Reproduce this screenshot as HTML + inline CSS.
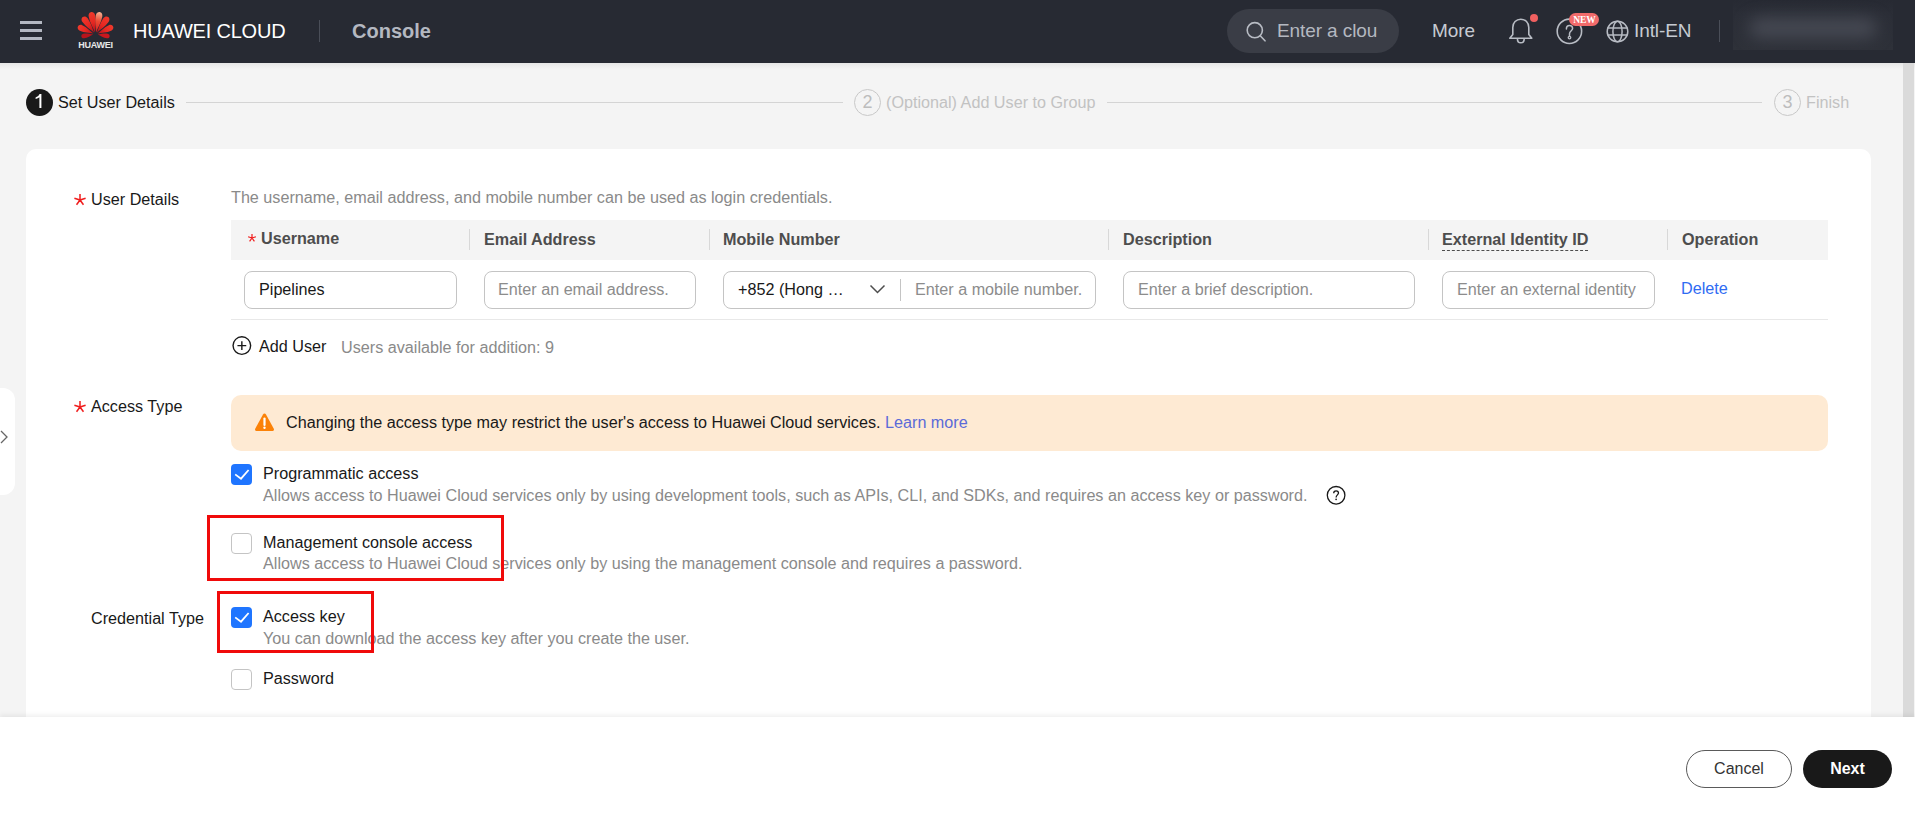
<!DOCTYPE html>
<html><head><meta charset="utf-8">
<style>
*{box-sizing:border-box;margin:0;padding:0}
html,body{width:1915px;height:813px;overflow:hidden;background:#f4f4f4;font-family:"Liberation Sans",sans-serif;color:#191919}
.a{position:absolute;white-space:nowrap}
#hdr{position:absolute;left:0;top:0;width:1915px;height:63px;background:#272a33}
.t16{font-size:16.18px;line-height:20px;height:20px}
.gray{color:#8a8a8a}
.inp{position:absolute;height:38px;border:1px solid #c4c4c4;border-radius:8px;background:#fff}
.ph{color:#8c8c8c}
.th{font-weight:bold;color:#4d4d4d}
.cb{position:absolute;width:21px;height:21px;border-radius:4px}
.cb.on{background:#1f75ff}
.cb.off{border:1px solid #c4c4c4;background:#fff}
.redbox{position:absolute;border:3px solid #f00a0a}
</style></head><body>
<div id="hdr">
  <!-- hamburger -->
  <div class="a" style="left:20px;top:21px;width:22px;height:3px;background:#b4b8c2"></div>
  <div class="a" style="left:20px;top:29px;width:22px;height:3px;background:#b4b8c2"></div>
  <div class="a" style="left:20px;top:37px;width:22px;height:3px;background:#b4b8c2"></div>
  <!-- logo -->
  <svg class="a" style="left:76px;top:10px" width="40" height="30" viewBox="0 0 40 30"><defs><linearGradient id="g1" x1="0" y1="1" x2="0" y2="0"><stop offset="0" stop-color="#b8101a"/><stop offset="0.5" stop-color="#e62822"/><stop offset="1" stop-color="#f03a2c"/></linearGradient><linearGradient id="g2" x1="0" y1="1" x2="0" y2="0"><stop offset="0" stop-color="#d81e1e"/><stop offset="0.55" stop-color="#ec4a34"/><stop offset="1" stop-color="#f8b494"/></linearGradient></defs><path d="M0,0 C-0.99,-5.19 -3.30,-10.38 -3.30,-16.60 C-3.30,-19.71 -1.32,-20.75 0,-20.75 C1.32,-20.75 3.30,-19.71 3.30,-16.60 C3.30,-10.38 0.99,-5.19 0,0Z" fill="url(#g1)" transform="translate(19.00,22.40) rotate(-10.55)"/><path d="M0,0 C-0.99,-5.19 -3.30,-10.38 -3.30,-16.60 C-3.30,-19.71 -1.32,-20.75 0,-20.75 C1.32,-20.75 3.30,-19.71 3.30,-16.60 C3.30,-10.38 0.99,-5.19 0,0Z" fill="url(#g2)" transform="translate(20.00,22.40) rotate(10.55)"/><path d="M0,0 C-0.96,-4.87 -3.20,-9.74 -3.20,-15.59 C-3.20,-18.51 -1.28,-19.48 0,-19.48 C1.28,-19.48 3.20,-18.51 3.20,-15.59 C3.20,-9.74 0.96,-4.87 0,0Z" fill="url(#g1)" transform="translate(18.20,22.80) rotate(-35.81)"/><path d="M0,0 C-0.96,-4.87 -3.20,-9.74 -3.20,-15.59 C-3.20,-18.51 -1.28,-19.48 0,-19.48 C1.28,-19.48 3.20,-18.51 3.20,-15.59 C3.20,-9.74 0.96,-4.87 0,0Z" fill="url(#g1)" transform="translate(20.80,22.80) rotate(35.81)"/><path d="M0,0 C-0.90,-4.26 -3.00,-8.53 -3.00,-13.65 C-3.00,-16.20 -1.20,-17.06 0,-17.06 C1.20,-17.06 3.00,-16.20 3.00,-13.65 C3.00,-8.53 0.90,-4.26 0,0Z" fill="url(#g1)" transform="translate(17.50,23.50) rotate(-66.14)"/><path d="M0,0 C-0.90,-4.26 -3.00,-8.53 -3.00,-13.65 C-3.00,-16.20 -1.20,-17.06 0,-17.06 C1.20,-17.06 3.00,-16.20 3.00,-13.65 C3.00,-8.53 0.90,-4.26 0,0Z" fill="url(#g1)" transform="translate(21.50,23.50) rotate(66.14)"/><path d="M0,0 C-0.69,-2.99 -2.30,-5.98 -2.30,-9.57 C-2.30,-11.37 -0.92,-11.97 0,-11.97 C0.92,-11.97 2.30,-11.37 2.30,-9.57 C2.30,-5.98 0.69,-2.99 0,0Z" fill="#b8141c" transform="translate(17.20,24.40) rotate(-99.62)"/><path d="M0,0 C-0.69,-2.99 -2.30,-5.98 -2.30,-9.57 C-2.30,-11.37 -0.92,-11.97 0,-11.97 C0.92,-11.97 2.30,-11.37 2.30,-9.57 C2.30,-5.98 0.69,-2.99 0,0Z" fill="#c8181e" transform="translate(21.80,24.40) rotate(99.62)"/></svg>
  <div class="a" style="left:76px;top:40px;width:39px;text-align:center;font-size:9px;line-height:10px;font-weight:bold;color:#e8e8e8;letter-spacing:-0.25px">HUAWEI</div>
  <div class="a" style="left:133px;top:20px;font-size:20px;line-height:23px;color:#fff;letter-spacing:-0.2px">HUAWEI CLOUD</div>
  <div class="a" style="left:319px;top:20px;width:1px;height:22px;background:#4a4e58"></div>
  <div class="a" style="left:352px;top:20px;font-size:20px;line-height:23px;color:#b4b8c1;font-weight:bold">Console</div>
  <!-- search -->
  <div class="a" style="left:1227px;top:9px;width:172px;height:44px;border-radius:22px;background:#3a3d46"></div>
  <svg class="a" style="left:1244px;top:20px" width="24" height="24" viewBox="0 0 24 24"><circle cx="10.8" cy="10.2" r="7.6" fill="none" stroke="#b8bcc4" stroke-width="1.6"/><path d="M16.2,15.8 L21,20.8" stroke="#b8bcc4" stroke-width="1.6" stroke-linecap="round"/></svg>
  <div class="a" style="left:1277px;top:20px;font-size:19px;line-height:22px;color:#b4b8c0;letter-spacing:-0.1px">Enter a clou</div>
  <div class="a" style="left:1432px;top:20px;font-size:19px;line-height:22px;color:#c6cad2;letter-spacing:-0.1px">More</div>
  <!-- bell -->
  <svg class="a" style="left:1506px;top:16px" width="30" height="30" viewBox="0 0 30 30"><path d="M3.8,22.2 L25.8,22.2 L22.8,18.4 L22.8,11.4 C22.8,6.6 19.4,3.2 14.8,3.2 C10.2,3.2 6.8,6.6 6.8,11.4 L6.8,18.4 Z" fill="none" stroke="#b8bcc4" stroke-width="1.6" stroke-linejoin="round"/><path d="M11.4,22.4 C11.4,25 12.9,26.8 14.8,26.8 C16.7,26.8 18.2,25 18.2,22.4" fill="none" stroke="#b8bcc4" stroke-width="1.6"/></svg>
  <div class="a" style="left:1530px;top:14px;width:8px;height:8px;border-radius:50%;background:#f06060"></div>
  <!-- help -->
  <svg class="a" style="left:1555px;top:17px" width="29" height="29" viewBox="0 0 29 29"><circle cx="14.4" cy="14.3" r="12.2" fill="none" stroke="#b8bcc4" stroke-width="1.6"/><path d="M11.4,12 C11.4,9.9 12.8,8.6 14.5,8.6 C16.3,8.6 17.6,9.9 17.6,11.6 C17.6,13.6 14.5,14.1 14.5,16.8 L14.5,18.8" fill="none" stroke="#b8bcc4" stroke-width="1.5" stroke-linecap="round"/><circle cx="14.5" cy="20.6" r="1.3" fill="none" stroke="#b8bcc4" stroke-width="1.3"/></svg>
  <div class="a" style="left:1569px;top:13px;width:30px;height:13px;border-radius:7px;background:#f26b6b;color:#fff;font-family:'Liberation Serif',serif;font-weight:bold;font-size:9.5px;line-height:13px;text-align:center;padding:1px 0 0 1px">NEW</div>
  <!-- globe -->
  <svg class="a" style="left:1605px;top:19px" width="25" height="25" viewBox="0 0 25 25"><circle cx="12.5" cy="12.5" r="10.3" fill="none" stroke="#b8bcc4" stroke-width="1.5"/><ellipse cx="12.5" cy="12.5" rx="4.6" ry="10.3" fill="none" stroke="#b8bcc4" stroke-width="1.5"/><path d="M2.5,9 H22.5 M2.5,16 H22.5" stroke="#b8bcc4" stroke-width="1.5"/></svg>
  <div class="a" style="left:1634px;top:20px;font-size:19px;line-height:22px;color:#c6cad2;letter-spacing:-0.1px">Intl-EN</div>
  <div class="a" style="left:1719px;top:20px;width:1px;height:22px;background:#4a4e58"></div>
  <!-- blurred user -->
  <div class="a" style="left:1733px;top:0px;width:160px;height:50px;background:linear-gradient(#272a33,#2b2e37 30%,#2e3139);overflow:hidden">
    <div style="position:absolute;left:16px;top:18px;width:128px;height:20px;border-radius:10px;background:#464953;filter:blur(8px)"></div>
  </div>
</div>
<!-- header shadow -->
<div class="a" style="left:0;top:63px;width:1915px;height:6px;background:linear-gradient(#e6e6e6,#f4f4f4)"></div>

<!-- steps -->
<div class="a" style="left:26px;top:89px;width:27px;height:27px;border-radius:50%;background:#191919"></div><svg class="a" style="left:26px;top:89px" width="27" height="27" viewBox="0 0 27 27"><path d="M13.6,5 L15.4,5 L15.4,19 L13.4,19 L13.4,8.2 C12.4,9 11.2,9.6 9.6,10 L9.6,8.4 C11.3,7.8 12.7,6.8 13.6,5Z" fill="#fff"/></svg>
<div class="a t16" style="left:58px;top:92px">Set User Details</div>
<div class="a" style="left:186px;top:102px;width:657px;height:1px;background:#d4d4d4"></div>
<div class="a" style="left:854px;top:89px;width:27px;height:27px;border-radius:50%;border:1px solid #c8c8c8;color:#bdbdbd;font-size:18px;line-height:25px;text-align:center">2</div>
<div class="a t16" style="left:886px;top:92px;color:#c2c2c2">(Optional) Add User to Group</div>
<div class="a" style="left:1107px;top:102px;width:655px;height:1px;background:#d4d4d4"></div>
<div class="a" style="left:1774px;top:89px;width:27px;height:27px;border-radius:50%;border:1px solid #c8c8c8;color:#bdbdbd;font-size:18px;line-height:25px;text-align:center">3</div>
<div class="a t16" style="left:1806px;top:92px;color:#c2c2c2">Finish</div>

<!-- card -->
<div class="a" style="left:26px;top:149px;width:1845px;height:700px;border-radius:10px;background:#fff"></div>

<!-- scrollbar -->
<div class="a" style="left:1903px;top:63px;width:11px;height:654px;background:#dadada"></div>

<!-- left tab -->
<div class="a" style="left:-12px;top:388px;width:27px;height:107px;border-radius:12px;background:#fff"></div>
<svg class="a" style="left:0;top:429px" width="10" height="16" viewBox="0 0 10 16"><path d="M1,2 L7,8 L1,14" fill="none" stroke="#666" stroke-width="1.3"/></svg>

<!-- User details -->
<svg class="a" style="left:72.10px;top:191.90px" width="16" height="16" viewBox="0 0 16 16"><path d="M8.00,8.00 L8.00,2.10 M8.00,8.00 L13.61,6.18 M8.00,8.00 L11.47,12.77 M8.00,8.00 L4.53,12.77 M8.00,8.00 L2.39,6.18" stroke="#f01c1c" stroke-width="1.5" stroke-linecap="butt" fill="none"/></svg>
<div class="a t16" style="left:91px;top:189px">User Details</div>
<div class="a t16 gray" style="left:231px;top:187px">The username, email address, and mobile number can be used as login credentials.</div>

<div class="a" style="left:231px;top:220px;width:1597px;height:40px;background:#f4f4f4"></div>
<div class="a" style="left:231px;top:319px;width:1597px;height:1px;background:#e8e8e8"></div>
<div class="a" style="left:469px;top:229px;width:1px;height:21px;background:#d8d8d8"></div>
<div class="a" style="left:709px;top:229px;width:1px;height:21px;background:#d8d8d8"></div>
<div class="a" style="left:1108px;top:229px;width:1px;height:21px;background:#d8d8d8"></div>
<div class="a" style="left:1428px;top:229px;width:1px;height:21px;background:#d8d8d8"></div>
<div class="a" style="left:1667px;top:229px;width:1px;height:21px;background:#d8d8d8"></div>

<svg class="a" style="left:245.20px;top:231.40px" width="14" height="14" viewBox="0 0 14 14"><path d="M7.00,7.00 L7.00,2.90 M7.00,7.00 L10.90,5.73 M7.00,7.00 L9.41,10.32 M7.00,7.00 L4.59,10.32 M7.00,7.00 L3.10,5.73" stroke="#f01c1c" stroke-width="1.2" stroke-linecap="butt" fill="none"/></svg>
<div class="a t16 th" style="left:261px;top:228px">Username</div>
<div class="a t16 th" style="left:484px;top:229px">Email Address</div>
<div class="a t16 th" style="left:723px;top:229px">Mobile Number</div>
<div class="a t16 th" style="left:1123px;top:229px">Description</div>
<div class="a t16 th" style="left:1442px;top:229px;border-bottom:1px dashed #4d4d4d;height:22px">External Identity ID</div>
<div class="a t16 th" style="left:1682px;top:229px">Operation</div>

<div class="inp" style="left:244px;top:271px;width:213px"></div>
<div class="a t16" style="left:259px;top:279px">Pipelines</div>
<div class="inp" style="left:484px;top:271px;width:212px"></div>
<div class="a t16 ph" style="left:498px;top:279px">Enter an email address.</div>
<div class="inp" style="left:723px;top:271px;width:373px"></div>
<div class="a t16" style="left:738px;top:279px">+852 (Hong …</div>
<svg class="a" style="left:869px;top:284px" width="17" height="11" viewBox="0 0 17 11"><path d="M1.5,1.5 L8.5,8.5 L15.5,1.5" fill="none" stroke="#4d4d4d" stroke-width="1.5"/></svg>
<div class="a" style="left:900px;top:279px;width:1px;height:22px;background:#c4c4c4"></div>
<div class="a t16 ph" style="left:915px;top:279px">Enter a mobile number.</div>
<div class="inp" style="left:1123px;top:271px;width:292px"></div>
<div class="a t16 ph" style="left:1138px;top:279px">Enter a brief description.</div>
<div class="inp" style="left:1442px;top:271px;width:213px"></div>
<div class="a t16 ph" style="left:1457px;top:279px;width:180px;overflow:hidden">Enter an external identity ID.</div>
<div class="a t16" style="left:1681px;top:278px;color:#2f6cf3">Delete</div>

<svg class="a" style="left:231px;top:335px" width="21" height="21" viewBox="0 0 21 21"><circle cx="10.85" cy="10.6" r="8.8" fill="none" stroke="#191919" stroke-width="1.4"/><path d="M10.85,6.2 V15 M6.45,10.6 H15.25" stroke="#191919" stroke-width="1.4"/></svg>
<div class="a t16" style="left:259px;top:336px">Add User</div>
<div class="a t16 gray" style="left:341px;top:337px">Users available for addition: 9</div>

<!-- Access type -->
<svg class="a" style="left:72.10px;top:399.30px" width="16" height="16" viewBox="0 0 16 16"><path d="M8.00,8.00 L8.00,2.10 M8.00,8.00 L13.61,6.18 M8.00,8.00 L11.47,12.77 M8.00,8.00 L4.53,12.77 M8.00,8.00 L2.39,6.18" stroke="#f01c1c" stroke-width="1.5" stroke-linecap="butt" fill="none"/></svg>
<div class="a t16" style="left:91px;top:396px">Access Type</div>
<div class="a" style="left:231px;top:395px;width:1597px;height:56px;border-radius:10px;background:#feead3"></div>
<svg class="a" style="left:254px;top:412px" width="21" height="20" viewBox="0 0 21 20"><path d="M10.5,1.5 C11.2,1.5 11.6,1.9 12,2.5 L19.8,16.8 C20.3,17.8 19.8,19 18.6,19 L2.4,19 C1.2,19 0.7,17.8 1.2,16.8 L9,2.5 C9.4,1.9 9.8,1.5 10.5,1.5Z" fill="#fb8208"/><path d="M10.5,6.5 V13" stroke="#fff" stroke-width="2.2" stroke-linecap="round"/><circle cx="10.5" cy="15.8" r="1.2" fill="#fff"/></svg>
<div class="a t16" style="left:286px;top:412px">Changing the access type may restrict the user's access to Huawei Cloud services. <span style="color:#5b6ad8">Learn more</span></div>

<div class="cb on" style="left:231px;top:464px"></div>
<svg class="a" style="left:231px;top:464px" width="21" height="21" viewBox="0 0 21 21"><path d="M4.2,10.4 L10,14.7 L17.6,6" fill="none" stroke="#fff" stroke-width="1.8"/></svg>
<div class="a t16" style="left:263px;top:463px">Programmatic access</div>
<div class="a t16 gray" style="left:263px;top:485px">Allows access to Huawei Cloud services only by using development tools, such as APIs, CLI, and SDKs, and requires an access key or password.</div>
<svg class="a" style="left:1325px;top:484px" width="22" height="22" viewBox="0 0 22 22"><circle cx="11.1" cy="11.3" r="8.8" fill="none" stroke="#191919" stroke-width="1.3"/><path d="M8.7,9.3 C8.7,7.8 9.8,6.8 11.1,6.8 C12.5,6.8 13.5,7.8 13.5,9.1 C13.5,10.8 11.1,11.1 11.1,13.4" fill="none" stroke="#191919" stroke-width="1.3"/><circle cx="11.1" cy="15.3" r="0.85" fill="#191919"/></svg>

<div class="cb off" style="left:231px;top:533px"></div>
<div class="a t16" style="left:263px;top:532px">Management console access</div>
<div class="a t16 gray" style="left:263px;top:553px">Allows access to Huawei Cloud services only by using the management console and requires a password.</div>

<div class="a t16" style="left:91px;top:608px">Credential Type</div>
<div class="cb on" style="left:231px;top:607px"></div>
<svg class="a" style="left:231px;top:607px" width="21" height="21" viewBox="0 0 21 21"><path d="M4.2,10.4 L10,14.7 L17.6,6" fill="none" stroke="#fff" stroke-width="1.8"/></svg>
<div class="a t16" style="left:263px;top:606px">Access key</div>
<div class="a t16 gray" style="left:263px;top:628px">You can download the access key after you create the user.</div>
<div class="cb off" style="left:231px;top:669px"></div>
<div class="a t16" style="left:263px;top:668px">Password</div>

<div class="redbox" style="left:207px;top:515px;width:297px;height:66px"></div>
<div class="redbox" style="left:217px;top:591px;width:157px;height:62px"></div>

<!-- footer -->
<div class="a" style="left:0;top:717px;width:1915px;height:96px;background:#fff;box-shadow:0 -2px 5px rgba(0,0,0,0.065)"></div>
<div class="a" style="left:1686px;top:750px;width:106px;height:38px;border:1px solid #5a5a5a;border-radius:19px;background:#fff;text-align:center;font-size:16px;line-height:36px;color:#333">Cancel</div>
<div class="a" style="left:1803px;top:750px;width:89px;height:38px;border-radius:19px;background:#191919;text-align:center;font-size:16px;line-height:38px;color:#fff;font-weight:bold">Next</div>
</body></html>
